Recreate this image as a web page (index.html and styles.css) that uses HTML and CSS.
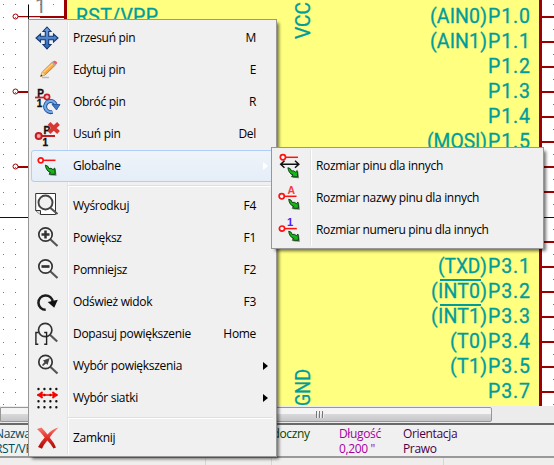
FILE: index.html
```
<!DOCTYPE html>
<html lang="pl">
<head>
<meta charset="utf-8">
<title>Edytor symboli</title>
<link rel="stylesheet" href="styles.css">
</head>
<body>
<svg width="0" height="0" class="defs" aria-hidden="true">
  <defs>
    <pattern id="grid" x="3" y="4" width="25" height="25" patternUnits="userSpaceOnUse"><path d="M0 0H1V1H0ZM12 0H13V1H12ZM0 13H1V14H0ZM12 13H13V14H12Z" fill="#777"/></pattern>
    <linearGradient id="blue" x1="0" y1="0" x2="0" y2="1"><stop offset="0" stop-color="#75a4e6"/><stop offset="1" stop-color="#2763b9"/></linearGradient>
    <linearGradient id="red" x1="0" y1="0" x2="0" y2="1"><stop offset="0" stop-color="#f87b70"/><stop offset=".5" stop-color="#df2a22"/><stop offset="1" stop-color="#a90c0c"/></linearGradient>
    <g id="green"><path d="M.6.4 4.2 3.2Q6 2.6 8 4.4L10 3 10.8 10 4 9.6 5.6 8Q1.600 7.500.6.4Z" fill="#777" transform="translate(.7 .7)"/><path d="M.4.200Q3.300.5 4 3.500 6 2.500 8 4.600L9.700 3 10.200 9.300 4 9.200 5.600 7.500Q1 6 .4.200Z" fill="#16b61b" stroke="#073b08" stroke-width=".9"/></g>
    <g id="lens"><path d="M15.500 13.500 22.500 20" stroke="#555" stroke-width="2.200"/><circle cx="10.500" cy="8.500" r="6.700" fill="#f4f4f4" stroke="#333" stroke-width="1.700"/></g>
  </defs>
</svg>

<div class="app">
  <svg class="sheet" width="554" height="406" viewBox="0 0 554 406">
    <rect width="554" height="406" fill="#fff"/>
    <rect width="554" height="406" fill="url(#grid)"/>
    <path d="M0 217.500H554" stroke="#00009c"/>
    <rect x="65.500" y="-10" width="475" height="430" fill="#ffff80" stroke="#9c0000" stroke-width="3"/>
    <g stroke="#9c0000" stroke-width="2" fill="none">
      <path d="M18 17H66M18 92H66M18 167H66"/>
      <path d="M542 17H554M542 42H554M542 67H554M542 92H554M542 117H554M542 142H554M542 167H554M542 192H554M542 242H554M542 267H554M542 292H554M542 317H554M542 342H554M542 367H554M542 392H554"/>
      <g stroke-width="1"><circle cx="15.500" cy="16.500" r="2.500"/><circle cx="15.500" cy="91.500" r="2.500"/><circle cx="15.500" cy="166.500" r="2.500"/></g>
    </g>
    <path d="M18 17.500H40" stroke="#63ffff"/>
    <path d="M28.500 5V20" stroke="#000"/>
    <text class="number" x="35" y="13">1</text>
    <g class="pin">
      <text x="76" y="23" textLength="82">RST/VPP</text>
      <text transform="translate(309.500 39) rotate(-90)" textLength="37" lengthAdjust="spacingAndGlyphs">VCC</text>
      <text transform="translate(309.500 406) rotate(-90)" textLength="37" lengthAdjust="spacingAndGlyphs">GND</text>
      <text x="430" y="23" textLength="57">(AIN0)</text><text x="488" y="23" textLength="42">P1.0</text>
      <text x="430" y="48" textLength="57">(AIN1)</text><text x="488" y="48" textLength="42">P1.1</text>
      <text x="488" y="73" textLength="42">P1.2</text>
      <text x="488" y="98" textLength="42">P1.3</text>
      <text x="488" y="123" textLength="42">P1.4</text>
      <text x="427" y="148" textLength="60" lengthAdjust="spacingAndGlyphs">(MOSI)</text><text x="488" y="148" textLength="42">P1.5</text>
      <text x="438" y="273" textLength="49" lengthAdjust="spacingAndGlyphs">(TXD)</text><text x="488" y="273" textLength="42">P3.1</text>
      <text x="431" y="298" textLength="56">(INT0)</text><text x="488" y="298" textLength="42">P3.2</text>
      <text x="431" y="323" textLength="56">(INT1)</text><text x="488" y="323" textLength="42">P3.3</text>
      <text x="450" y="348" textLength="37">(T0)</text><text x="488" y="348" textLength="42">P3.4</text>
      <text x="450" y="373" textLength="37">(T1)</text><text x="488" y="373" textLength="42">P3.5</text>
      <text x="488" y="398" textLength="42">P3.7</text>
    </g>
    <path d="M440 280H481M440 305H481" stroke="#009c9c" stroke-width="2"/>
  </svg>
  <div class="scrollbar"><div class="thumb"><i></i><i></i><i></i></div></div>
  <div class="info">
    <dl class="name"><dt>Nazwa</dt><dd>RST/VPP</dd></dl>
    <dl class="visible"><dt>Widoczny</dt></dl>
    <dl class="length"><dt>Długość</dt><dd>0,200 "</dd></dl>
    <dl class="orient"><dt>Orientacja</dt><dd>Prawo</dd></dl>
  </div>
  <div class="status"><span></span><span></span><span></span></div>
</div>

<div class="menu main">
  <div class="item"><svg viewBox="0 0 24 24"><path d="M12 1 16 5.500H13.700V10.300H18.500V8L23 12 18.500 16V13.700H13.700V18.500H16L12 23 8 18.500H10.300V13.700H5.500V16L1 12 5.500 8V10.300H10.300V5.500H8Z" fill="url(#blue)" stroke="#17386e" stroke-width="1.100"/></svg><span>Przesuń pin</span><kbd>M</kbd></div>
  <div class="item"><svg viewBox="0 0 24 24"><path d="M7 19.500H14" stroke="#bbb" stroke-width="1.500"/><path d="M5.500 18.500 7.300 14 17.500 4 20.500 7 10 17Z" fill="#f7a842" stroke="#a9661c" stroke-width=".7"/><path d="M8.500 14.300 18.500 4.700" stroke="#ffd58b" stroke-width="1.200"/><path d="M5.500 18.500 7.300 14 10 17Z" fill="#f3d6a5"/><path d="M5.500 18.500 6.300 16.500 7.600 17.800Z" fill="#222"/><path d="M16.600 4.700 18 3.500 21.200 6.300 19.900 7.700Z" fill="#aaa"/><path d="M17.700 3.800Q19.500 2 21.300 3.500T21 6.600Z" fill="#e8616b"/></svg><span>Edytuj pin</span><kbd>E</kbd></div>
  <div class="item"><svg viewBox="0 0 24 24"><text class="ink" x="2.300" y="6.600">P</text><text class="ink" x="1.700" y="17">1</text><path d="M0 7.500H10" stroke="#c51d24" stroke-width="1.700"/><circle cx="12" cy="7" r="2.600" fill="#f4c4c4" stroke="#c51d24" stroke-width="1.700"/><path d="M17.500 21.800A5.500 5.500 0 1 1 21 15.500" fill="none" stroke="#205095" stroke-width="4"/><path d="M17.500 21.600A5.500 5.500 0 1 1 21 15.500" fill="none" stroke="#75a8e8" stroke-width="2.200"/><path d="M17 14.500H25L21.500 20Z" fill="#3d79cc" stroke="#205095" stroke-width=".8"/></svg><span>Obróć pin</span><kbd>R</kbd></div>
  <div class="item"><svg viewBox="0 0 24 24"><text class="ink" x="8.500" y="12">P</text><text class="ink" x="7.500" y="24">1</text><path d="M5 14H20" stroke="#c51d24" stroke-width="2"/><circle cx="3.700" cy="14" r="3" fill="#f4a4a4" stroke="#c51d24" stroke-width="2"/><path d="M14 1.500 23.500 10.500M23.500 1.500 14 10.500" stroke="#d93832" stroke-width="4"/></svg><span>Usuń pin</span><kbd>Del</kbd></div>
  <div class="item open"><svg viewBox="0 0 24 24"><path d="M8 6.300H20.500" stroke="#f11" stroke-width="1.500"/><circle cx="5.700" cy="6.300" r="2.500" fill="#fff" stroke="#f11" stroke-width="1.700"/><use href="#green" x="10" y="11"/></svg><span>Globalne</span><b class="arrow"></b></div>
  <hr>
  <div class="item"><svg viewBox="0 0 24 24"><path d="M.7-.5H20.500V20.500H5.500L.7 16.500Z" fill="#fff" stroke="#333"/><path d="M.7 16.500H5.500V20.500" fill="#ddd" stroke="#333"/><path d="M15.500 14 22.500 20" stroke="#555" stroke-width="2.200"/><circle cx="10.500" cy="8.500" r="7" fill="#f1f1f1" stroke="#444" stroke-width="1.900"/></svg><span>Wyśrodkuj</span><kbd>F4</kbd></div>
  <div class="item"><svg viewBox="0 0 24 24"><use href="#lens"/><path d="M6.500 8.500H14.500M10.500 4.500V12.500" stroke="#333" stroke-width="2.500"/></svg><span>Powiększ</span><kbd>F1</kbd></div>
  <div class="item"><svg viewBox="0 0 24 24"><use href="#lens"/><path d="M6.500 8.500H14.500" stroke="#333" stroke-width="2.700"/></svg><span>Pomniejsz</span><kbd>F2</kbd></div>
  <div class="item"><svg viewBox="0 0 24 24"><path d="M10.700 19.800A7.200 7.200 0 1 1 17.800 12" fill="none" stroke="#1c1c1c" stroke-width="2.500"/><path d="M12.700 12 22.800 9.700 19.200 17.700Z" fill="#111"/></svg><span>Odśwież widok</span><kbd>F3</kbd></div>
  <div class="item"><svg viewBox="0 0 24 24"><use href="#lens" x="-.3" y="-.5"/><path d="M3.300 10.500H.9V22.300H3.300M9.200 10.500H11.600V22.300H9.200" fill="none" stroke="#222" stroke-width="1.400"/></svg><span>Dopasuj powiększenie</span><kbd>Home</kbd></div>
  <div class="item"><svg viewBox="0 0 24 24"><use href="#lens" y="-.5"/><path d="M14.700 4 12.500 11 11 9.500 8 12 7 11 9.500 8 8 6.500Z" fill="#444"/></svg><span>Wybór powiększenia</span><b class="arrow"></b></div>
  <div class="item"><svg viewBox="0 0 24 24"><path d="M3.500 3H22M3.500 9H22M3.500 15.300H22M3.500 21.300H22" stroke="#111" stroke-width="2.400" stroke-linecap="round" stroke-dasharray="0 5.950"/><path d="M5 9H20M7.500 6 3.500 9 7.500 12M17.500 6 21.500 9 17.500 12" stroke="#f00" stroke-width="1.600" fill="#f00"/></svg><span>Wybór siatki</span><b class="arrow"></b></div>
  <hr>
  <div class="item"><svg viewBox="0 0 24 24"><path d="M2 3 6.500 1.500Q9.500 4.500 12.500 8.500 17 3 23.500 1.500 18 6.500 14.700 11.500 19 16.500 21 21.500L18.500 22.500Q15.500 17.500 12.300 14.500 8.500 19 7 22.800L3 21Q5.500 16 9.700 11.500 6 6.500 2 3Z" fill="url(#red)"/></svg><span>Zamknij</span></div>
</div>

<div class="menu sub">
  <div class="item"><svg viewBox="0 0 24 24"><path d="M7 3.300H20" stroke="#f11" stroke-width="1.500"/><circle cx="4.900" cy="3.300" r="2.600" fill="#fff" stroke="#f11" stroke-width="1.700"/><path d="M3 10.300H20.500M6.500 6.800 2.700 10.300 6.500 13.800M17 6.800 20.800 10.300 17 13.800" fill="none" stroke="#111" stroke-width="1.500"/><use href="#green" x="9.500" y="13.500"/></svg><span>Rozmiar pinu dla innych</span></div>
  <div class="item"><svg viewBox="0 0 24 24"><path d="M6 10.300H18.500" stroke="#f11" stroke-width="1.500"/><circle cx="3.700" cy="10.300" r="2.600" fill="#fff" stroke="#f11" stroke-width="1.700"/><text class="mark" x="9.400" y="8">A</text><use href="#green" x="10.300" y="13"/></svg><span>Rozmiar nazwy pinu dla innych</span></div>
  <div class="item"><svg viewBox="0 0 24 24"><path d="M6 10.600H18.800" stroke="#f11" stroke-width="1.500"/><circle cx="4" cy="10.600" r="2.600" fill="#fff" stroke="#f11" stroke-width="1.700"/><text class="mark one" x="9" y="8.300">1</text><use href="#green" x="10.300" y="13"/></svg><span>Rozmiar numeru pinu dla innych</span></div>
</div>
</body>
</html>
```
FILE: styles.css
```
* { box-sizing: border-box; }

body {
  margin: 0;
  width: 554px;
  height: 465px;
  overflow: hidden;
  font: 12px/16px "Open Sans", "Noto Sans", sans-serif;
  color: #000;
}

.defs { position: absolute; }

.app {
  display: flex;
  flex-direction: column;
  height: 465px;
  overflow: hidden;
  background: #f0eded;
}

.sheet { display: block; flex: none; }

.pin { fill: #009c9c; stroke: #009c9c; stroke-width: .3; font: 19.5px Roboto, sans-serif; }
.number { fill: #808080; font: 20px Roboto, sans-serif; }

.scrollbar {
  flex: none;
  height: 17px;
  padding: 1px 0;
  background: #ececec;
}

.thumb {
  display: flex;
  justify-content: center;
  align-items: center;
  gap: 1px;
  width: 492px;
  height: 15px;
  padding-left: 148px;
  border: 1px solid #979797;
  border-radius: 0 2px 2px 0;
  background: linear-gradient(#f4f4f4 0 45%, #d8d8da 50%, #c6c6c8);
}

.thumb i { width: 2px; height: 7px; background: #777; border-right: 1px solid #eee; }

.info {
  display: grid;
  grid-template-columns: 265px 79px 64px 1fr;
  flex: none;
  height: 35px;
  border-top: 2px solid #696969;
  border-bottom: 2px solid #999;
  background: #f0f0f0;
  line-height: 15px;
  letter-spacing: -.35px;
}

.info dl { margin: 1px 0 0; white-space: nowrap; }
.info dt, .info dd { margin: 0; height: 15px; }
.info .name { margin-left: -5px; color: #004a5c; }
.info .visible { margin-left: -6px; color: #004800; }
.info .length { margin-left: -5px; color: #a400a4; }
.info .orient { margin-left: -5px; color: #480048; }

.status { display: flex; flex: 1; }
.status span { width: 66px; border-right: 1px solid #d9d5d5; }
.status span:first-child { width: 206px; }
.status span:last-child { width: 172px; }

.menu {
  position: absolute;
  padding: 2px;
  border: 1px solid #979797;
  background: linear-gradient(90deg, transparent 36px, #e2e3e3 36px 37px, #fff 37px 38px, transparent 38px) 2px 2px / 100% calc(100% - 4px) no-repeat #f0f0f0;
  box-shadow: 3px 3px 3px -1px rgba(0, 0, 0, .55);
}

.main { left: 28px; top: 19px; width: 249px; }
.sub { left: 271px; top: 147px; width: 273px; }

.item {
  display: flex;
  align-items: center;
  height: 32px;
  padding: 0 18px 0 4px;
  white-space: nowrap;
  letter-spacing: -.32px;
}

.item svg { flex: none; width: 24px; height: 24px; margin-right: 14px; overflow: visible; }
.item kbd { margin-left: auto; font: inherit; }

.arrow {
  margin: 0 -12px 0 auto;
  border: 4px solid transparent;
  border-left: 5px solid #000;
  border-right: 0;
}

.open {
  padding: 0 17px 0 3px;
  border: 1px solid #aecff7;
  border-radius: 3px;
  background: linear-gradient(rgba(240, 244, 250, .95), rgba(228, 237, 248, .95));
}
.open .arrow { border-left-color: #fff; }

hr {
  height: 8px;
  margin: 0 1px 0 37px;
  border: 0;
  background: linear-gradient(#e0e0e0, #e0e0e0) 0 3px / 100% 1px no-repeat, linear-gradient(#fff, #fff) 0 4px / 100% 1px no-repeat;
}

.ink { font: bold 10px "Liberation Sans", sans-serif; fill: #111; stroke: #111; stroke-width: .3; }
.mark { font: bold 10.5px "Liberation Sans", sans-serif; fill: #f43b48; }
.one { font-size: 11px; fill: #4a20ff; }
```
